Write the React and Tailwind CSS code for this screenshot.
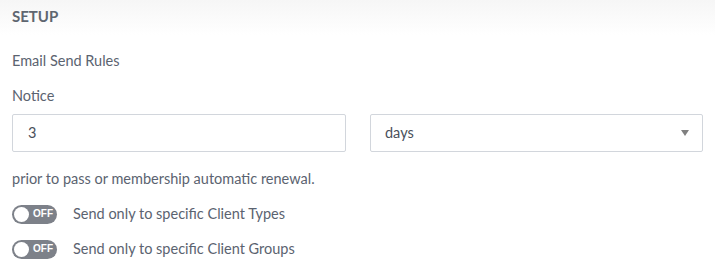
const Toggle = () => (
    <div className="relative flex items-center w-[45px] h-[19px] rounded-full bg-[#7d8189]">
        <span className="absolute left-[2px] w-[15px] h-[15px] rounded-full bg-white" />
        <span className="ml-[21px] text-[10px] font-bold text-white leading-none" style={{ fontFamily: '"Liberation Sans", sans-serif' }}>OFF</span>
    </div>
);

export default function App() {
    return (
        <div className="w-[715px] h-[276px] bg-white text-[#5b6370] text-[14.5px]" style={{ fontFamily: 'Lato, "Open Sans", sans-serif' }}>
            {/* Section header */}
            <div className="h-[35px] pl-[12px] pt-[6px] bg-gradient-to-b from-[#f6f6f6] to-white">
                <span className="text-[15px] font-bold text-[#5f6670] leading-[20px]">SETUP</span>
            </div>

            <div className="px-[12px]">
                <div className="mt-[16px] leading-[20px]">Email Send Rules</div>
                <div className="mt-[15px] leading-[20px]">Notice</div>

                <div className="mt-[8px] flex gap-[24px]">
                    <div className="w-[335px] h-[38px] border border-[#d2d6dc] rounded-[2px] flex items-center pl-[15px] text-[#4a505a]">
                        3
                    </div>
                    <div className="w-[334px] h-[38px] border border-[#d2d6dc] rounded-[2px] flex items-center justify-between pl-[14px] pr-[13px] text-[#4a505a]">
                        <span>days</span>
                        <svg width="8" height="6" viewBox="0 0 8 6">
                            <path d="M0 0h8L4 6z" fill="#808080" />
                        </svg>
                    </div>
                </div>

                <div className="mt-[17px] leading-[20px]">prior to pass or membership automatic renewal.</div>

                <div className="mt-[15px] flex items-center gap-[16px] leading-[20px]">
                    <Toggle />
                    <span>Send only to specific Client Types</span>
                </div>
                <div className="mt-[15px] flex items-center gap-[16px] leading-[20px]">
                    <Toggle />
                    <span>Send only to specific Client Groups</span>
                </div>
            </div>
        </div>
    );
}
